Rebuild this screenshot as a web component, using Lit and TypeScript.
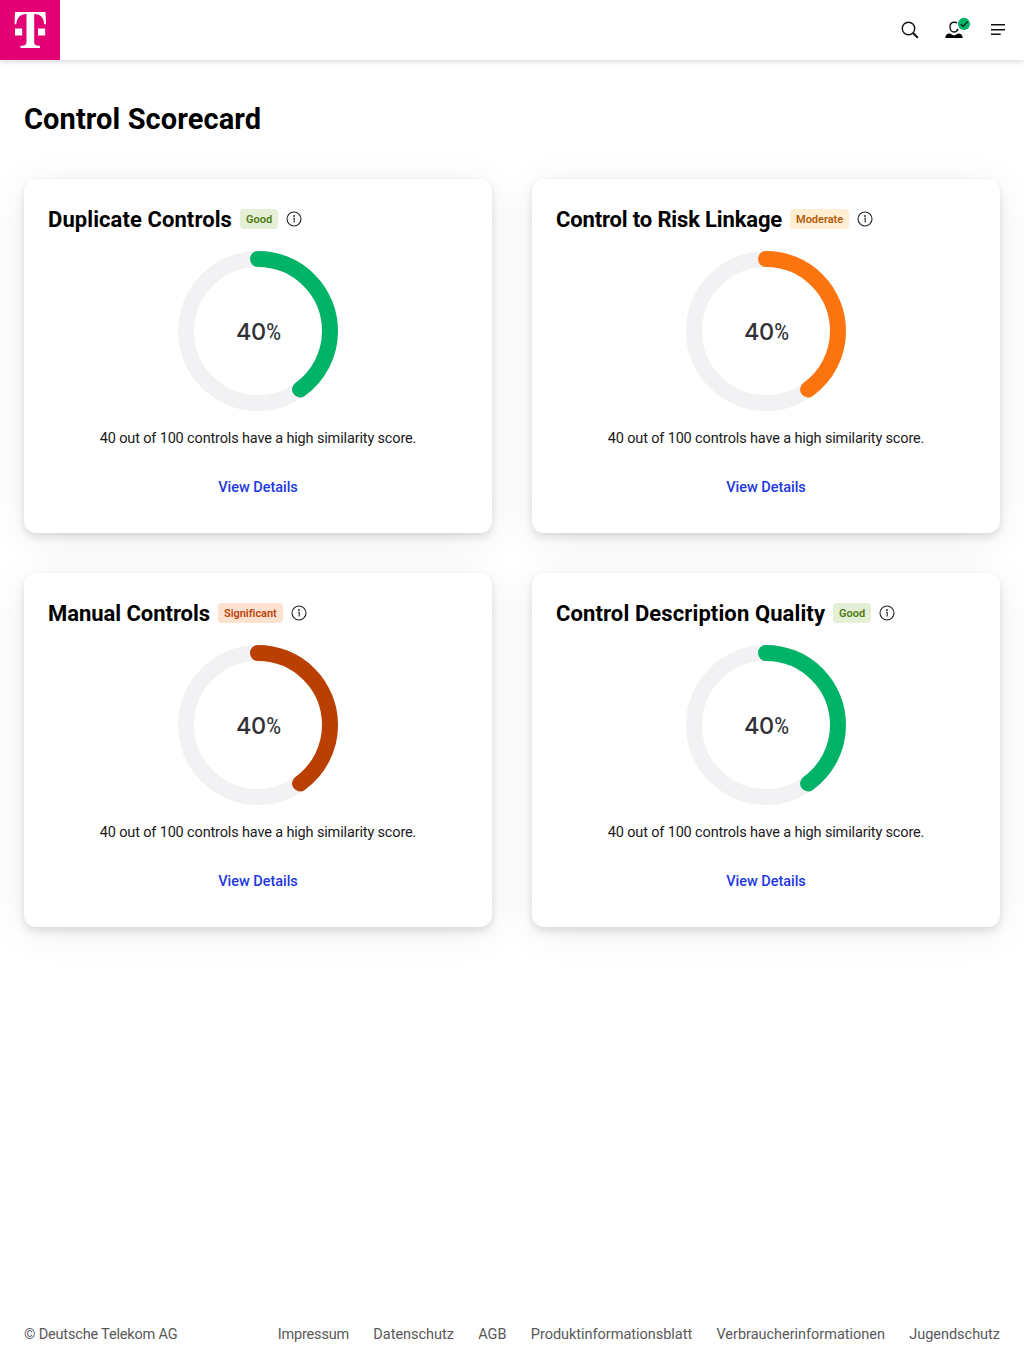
import { LitElement, html, svg, css } from "lit";
import { customElement, property } from "lit/decorators.js";

type Rating = "good" | "moderate" | "significant";

interface Metric {
  title: string;
  tracking: number;
  label: string;
  rating: Rating;
  tone: string;
  value: number;
}

const METRICS: Metric[] = [
  { title: "Duplicate Controls", tracking: 0.08, label: "Good", rating: "good", tone: "green", value: 40 },
  { title: "Control to Risk Linkage", tracking: -0.15, label: "Moderate", rating: "moderate", tone: "orange", value: 40 },
  { title: "Manual Controls", tracking: -0.04, label: "Significant", rating: "significant", tone: "rust", value: 40 },
  { title: "Control Description Quality", tracking: 0.11, label: "Good", rating: "good", tone: "green", value: 40 },
];

const LINKS = ["Impressum", "Datenschutz", "AGB", "Produktinformationsblatt", "Verbraucherinformationen", "Jugendschutz"];

@customElement("progress-ring")
class ProgressRing extends LitElement {
  @property({ type: Number }) value = 0;
  @property() tone = "green";

  static styles = css`
    :host { display: grid; width: 160px; height: 160px; }
    svg, .label { grid-area: 1 / 1; }
    svg { display: block; width: 160px; height: 160px; }
    circle { fill: none; stroke-width: 16; }
    .track { stroke: #f2f2f4; }
    .bar { stroke-linecap: round; }
    .green { stroke: #00b367; }
    .orange { stroke: #fb7410; }
    .rust { stroke: #b93f02; }
    .label {
      display: flex; align-items: baseline; justify-content: center; box-sizing: border-box;
      line-height: 28px; color: #313036; padding: 67px 0 0 0;
    }
    .num { font-family: Inter, Roboto, sans-serif; font-size: 23.5px; font-weight: 450; letter-spacing: -0.2px; }
    .pct { font-size: 24px; font-stretch: 75%; font-weight: 400; width: 14px; }
  `;

  render() {
    const c = 2 * Math.PI * 72;
    return html`
      <svg viewBox="0 0 160 160">
        <circle class="track" cx="80" cy="80" r="72"></circle>
        <circle class="bar ${this.tone}" cx="80" cy="80" r="72" transform="rotate(-90 80 80)"
          stroke-dasharray="${(c * this.value) / 100} ${c}"></circle>
      </svg>
      <div class="label"><span class="num">${this.value}</span><span class="pct">%</span></div>
    `;
  }
}

@customElement("score-card")
class ScoreCard extends LitElement {
  @property({ attribute: false }) metric!: Metric;

  static styles = css`
    :host {
      display: flex; flex-direction: column; box-sizing: border-box; height: 354px;
      padding: 24px; border-radius: 12px; background: #fff;
      box-shadow: 0 4px 10px -1px rgba(0, 0, 0, 0.14), 0 6px 40px rgba(0, 0, 0, 0.07);
    }
    .head { display: flex; align-items: center; height: 32px; gap: 8px; }
    h2 { margin: 0; padding-top: 2px; font-size: 22px; font-weight: 700; line-height: 32px; color: #000; white-space: nowrap; }
    .badge {
      box-sizing: border-box; height: 20px; padding: 1px 6px 0; border-radius: 4px;
      font-size: 11px; font-weight: 600; line-height: 20px; white-space: nowrap;
    }
    .good { background: #e5efd6; color: #4c7a12; }
    .moderate { background: #ffeed1; color: #b25a08; letter-spacing: -0.04px; }
    .significant { background: #fde1cf; color: #bb4309; letter-spacing: -0.03px; }
    .info { width: 16px; height: 16px; flex: none; }
    .body { display: flex; flex-direction: column; align-items: center; padding-top: 16px; }
    p {
      margin: 16px 0 0; font-size: 14.5px; line-height: 24px;
      letter-spacing: -0.15px; color: #1a1a1a;
    }
    a {
      margin-top: 25px; font-size: 14.5px; font-weight: 500; line-height: 24px;
      letter-spacing: -0.03px; color: #2238df; text-decoration: none;
    }
  `;

  render() {
    const m = this.metric;
    return html`
      <div class="head">
        <h2 style="letter-spacing:${m.tracking}px">${m.title}</h2>
        <span class="badge ${m.rating}">${m.label}</span>
        <svg class="info" viewBox="0 0 16 16">
          <circle cx="8" cy="8" r="7" fill="none" stroke="#222" stroke-width="1.1"></circle>
          <circle cx="8" cy="5" r="0.9" fill="#222"></circle>
          <path d="M7.2 7.3H8.2V11.4" fill="none" stroke="#222" stroke-width="1.1"></path>
        </svg>
      </div>
      <div class="body">
        <progress-ring .value=${m.value} .tone=${m.tone}></progress-ring>
        <p>${m.value} out of 100 controls have a high similarity score.</p>
        <a href="#">View Details</a>
      </div>
    `;
  }
}

const searchIcon = svg`
  <circle cx="7.5" cy="7.5" r="6.2" fill="none" stroke="#111" stroke-width="1.4"></circle>
  <path d="M12 12L16.8 16.8" fill="none" stroke="#111" stroke-width="2.1"></path>`;

const menuIcon = svg`<path d="M1 2.7H15M1 7.7H15M1 12.3H10.7" fill="none" stroke="#111" stroke-width="1.4"></path>`;

const userIcon = svg`
  <path d="M12 4.9C11 4.3 10 4.2 8.8 4.3C6.3 4.5 5 6.4 5 9C5 11.8 6.6 14 9 14C11 14 12.4 12.6 12.9 10.7" fill="none" stroke="#111" stroke-width="1.4"></path>
  <path d="M0.3 20C0.4 17.4 2 15.6 4.4 15.6C6 15.6 7.4 17.4 9 17.4C10.6 17.4 12 15.6 13.6 15.6C16 15.6 17.6 17.4 17.7 20Z" fill="#000"></path>
  <circle cx="19" cy="6" r="6.1" fill="#00b367"></circle>
  <path d="M15.7 6.1L18 8.4L22.7 3.7" fill="none" stroke="#111" stroke-width="1.2"></path>`;

@customElement("app-root")
class AppRoot extends LitElement {
  static styles = css`
    :host {
      display: flex; flex-direction: column; min-height: 1366px; background: #fff;
      font-family: Roboto, "Liberation Sans", sans-serif; color: #000;
    }
    header {
      display: flex; align-items: center; justify-content: space-between; height: 60px; padding-right: 18px;
      box-shadow: 0 2px 4px rgba(0, 0, 0, 0.08), 0 2px 10px rgba(0, 0, 0, 0.07);
    }
    .logo { width: 60px; height: 60px; display: block; }
    .actions { display: flex; align-items: flex-start; height: 24px; }
    .search { width: 18px; height: 18px; margin: 3px 26px 0 0; }
    .user { width: 26px; height: 21px; margin: 0 19px 0 0; }
    .menu { width: 16px; height: 15px; margin-top: 4px; }
    main { flex: 1; padding: 40px 24px 0; }
    h1 { margin: 0; font-size: 29px; font-weight: 700; letter-spacing: 0.1px; line-height: 38px; }
    .grid { display: grid; grid-template-columns: 1fr 1fr; gap: 40px; margin-top: 41px; }
    footer {
      display: flex; align-items: center; justify-content: space-between; height: 24px; padding: 0 24px 19px;
      font-size: 14.5px; line-height: 24px; letter-spacing: -0.17px; color: #585858;
    }
    nav { display: flex; gap: 24.3px; letter-spacing: -0.02px; }
    nav a { color: inherit; text-decoration: none; }
    nav a:first-child { letter-spacing: -0.2px; }
  `;

  render() {
    return html`
      <header>
        <svg class="logo" viewBox="0 0 60 60">
          <rect width="60" height="60" fill="#e20074"></rect>
          <path fill="#fff" d="M15 12H45.5L46 24.3H44.3C43.6 17.5 40.5 14.1 34.2 14V41.5C34.2 44.6 35.2 45.7 40 45.8V48H20.5V45.8C25.5 45.7 26.5 44.6 26.5 41.5V14C20.2 14.1 17 17.5 16.3 24.3H14.6ZM15 28.4H22.2V35.6H15ZM38 28.4H45.2V35.6H38Z"></path>
        </svg>
        <div class="actions">
          <svg class="search" viewBox="0 0 18 18">${searchIcon}</svg>
          <svg class="user" viewBox="0 0 26 21">${userIcon}</svg>
          <svg class="menu" viewBox="0 0 16 15">${menuIcon}</svg>
        </div>
      </header>
      <main>
        <h1>Control Scorecard</h1>
        <div class="grid">${METRICS.map((m) => html`<score-card .metric=${m}></score-card>`)}</div>
      </main>
      <footer>
        <span>© Deutsche Telekom AG</span>
        <nav>${LINKS.map((l) => html`<a href="#">${l}</a>`)}</nav>
      </footer>
    `;
  }
}
